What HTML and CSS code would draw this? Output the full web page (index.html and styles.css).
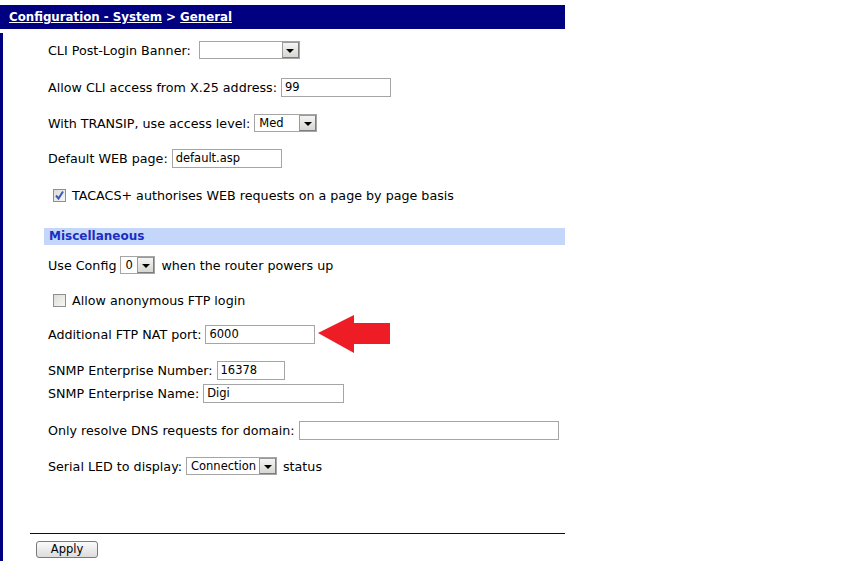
FILE: index.html
```html
<!DOCTYPE html>
<html>
<head>
<meta charset="utf-8">
<link rel="stylesheet" href="styles.css">
</head>
<body>
<div class="header"><a class="crumb">Configuration - System</a> &gt; <a class="crumb">General</a></div>
<div class="main">
  <div class="form">
    <div class="row r1"><span class="lbl wide">CLI Post-Login Banner:</span><span class="select w100"><span class="val"></span><span class="btn"><i></i></span></span></div>
    <div class="row r2"><span class="lbl">Allow CLI access from X.25 address:</span><input class="txt w110" value="99"></div>
    <div class="row r3"><span class="lbl">With TRANSIP, use access level:</span><span class="select w62"><span class="val">Med</span><span class="btn"><i></i></span></span></div>
    <div class="row r4"><span class="lbl">Default WEB page:</span><input class="txt w110" value="default.asp"></div>
    <div class="row r5 chkrow"><span class="chk on"><svg width="11" height="11" viewBox="0 0 11 11"><path d="M2 5.5 L4.5 8.5 L9 1.5" fill="none" stroke="#3a5ab8" stroke-width="2"/></svg></span><span class="lbl">TACACS+ authorises WEB requests on a page by page basis</span></div>
  </div>
  <div class="section">Miscellaneous</div>
  <div class="form">
    <div class="row r6"><span class="lbl">Use Config</span><span class="select w34"><span class="val">0</span><span class="btn"><i></i></span></span><span class="lbl after">when the router powers up</span></div>
    <div class="row r7 chkrow"><span class="chk"></span><span class="lbl">Allow anonymous FTP login</span></div>
    <div class="row r8"><span class="lbl">Additional FTP NAT port:</span><input class="txt w110" value="6000"><svg class="arrow" width="76" height="42" viewBox="0 0 76 42"><polygon points="1,19 37,1 37,9 73,9 73,30 37,30 37,39" fill="#ee1c25"/></svg></div>
    <div class="row r9"><span class="lbl">SNMP Enterprise Number:</span><input class="txt w68" value="16378"></div>
    <div class="row r10"><span class="lbl">SNMP Enterprise Name:</span><input class="txt w141" value="Digi"></div>
    <div class="row r11"><span class="lbl">Only resolve DNS requests for domain:</span><input class="txt w260" value=""></div>
    <div class="row r12"><span class="lbl">Serial LED to display:</span><span class="select w90"><span class="val">Connection</span><span class="btn"><i></i></span></span><span class="lbl after">status</span></div>
  </div>
  <div class="rule"></div>
  <div class="actions"><button class="apply">Apply</button></div>
</div>
</body>
</html>
```
FILE: styles.css
```css
* { box-sizing: border-box; }
body {
  margin: 0;
  font-family: "DejaVu Sans", Verdana, sans-serif;
  font-size: 12.7px;
  color: #000;
  background: #fff;
}
.header {
  margin-top: 5px;
  width: 565px;
  height: 24px;
  background: #000080;
  color: #fff;
  font-weight: bold;
  font-size: 11.8px;
  line-height: 24px;
  padding-left: 9px;
}
.crumb { color: #fff; text-decoration: underline; }
.main {
  margin-top: 4px;
  padding-top: 7px;
  border-left: 3px solid #000080;
  height: 528px;
  width: 565px;
}
.form { padding-left: 45px; }
.row {
  display: flex;
  align-items: center;
  height: 20px;
  white-space: nowrap;
}
.lbl { margin-right: 4px; }
.lbl.wide { margin-right: 8px; }
.lbl.after { margin-left: 6px; }
.r2 { margin-top: 17px; }
.r3 { margin-top: 16px; }
.r4 { margin-top: 15px; }
.r5 { margin-top: 17px; }
.r6 { margin-top: 10px; }
.r7 { margin-top: 15px; }
.r8 { margin-top: 14px; }
.r9 { margin-top: 16px; }
.r10 { margin-top: 3px; }
.r11 { margin-top: 17px; }
.r12 { margin-top: 16px; }
.chkrow { padding-left: 5px; }
.chk {
  width: 13px; height: 13px;
  border: 1px solid #8e8f8f;
  background: linear-gradient(135deg, #dcdcd8, #f6f6f4);
  margin-right: 6px;
  display: inline-flex;
  align-items: center;
  justify-content: center;
}
.chk svg { display: block; }
.select {
  display: inline-flex;
  height: 18px;
  border: 1px solid #a5a5a5;
  background: #fff;
  align-items: stretch;
}
.select .val { flex: 1; padding-left: 4px; line-height: 16px; font-size: 11.5px; }
.select .btn {
  width: 17px;
  border: 1px solid #7d7d7d;
  border-top-color: #9a9a9a;
  border-left-color: #9a9a9a;
  background: linear-gradient(#f4f4f2, #d6d6d2);
  display: flex;
  align-items: center;
  justify-content: center;
}
.select .btn i {
  width: 0; height: 0;
  border-left: 4px solid transparent;
  border-right: 4px solid transparent;
  border-top: 4px solid #000;
  margin-top: 2px;
}
.w100 { width: 101px; }
.w62 { width: 63px; }
.w34 { width: 35px; }
.w90 { width: 91px; }
.txt {
  height: 19px;
  border: 1px solid #a5a5a5;
  font-family: "DejaVu Sans", Verdana, sans-serif;
  font-size: 11.5px;
  padding: 0 3px;
  color: #000;
  background: #fff;
  outline: none;
}
.w110 { width: 110px; }
.w68 { width: 68px; }
.w141 { width: 141px; }
.w260 { width: 260px; }
.arrow { margin-left: 2px; margin-top: 1px; }
.section {
  margin-top: 23px;
  margin-left: 41px;
  width: 521px;
  height: 17px;
  background: #c5d6fb;
  color: #1a2fc0;
  font-weight: bold;
  font-size: 12px;
  line-height: 17px;
  padding-left: 5px;
}
.rule {
  margin-top: 57px;
  margin-left: 27px;
  width: 535px;
  border-top: 1px solid #000080;
}
.actions { padding-left: 33px; margin-top: 7px; }
.apply {
  width: 62px;
  height: 17px;
  border: 1px solid #7a7a7a;
  border-radius: 3px;
  background: linear-gradient(#fbfbfb, #dcdcdc);
  font-family: "DejaVu Sans", Verdana, sans-serif;
  font-size: 11.5px;
  padding: 0;
  line-height: 15px;
  color: #000;
}
```
